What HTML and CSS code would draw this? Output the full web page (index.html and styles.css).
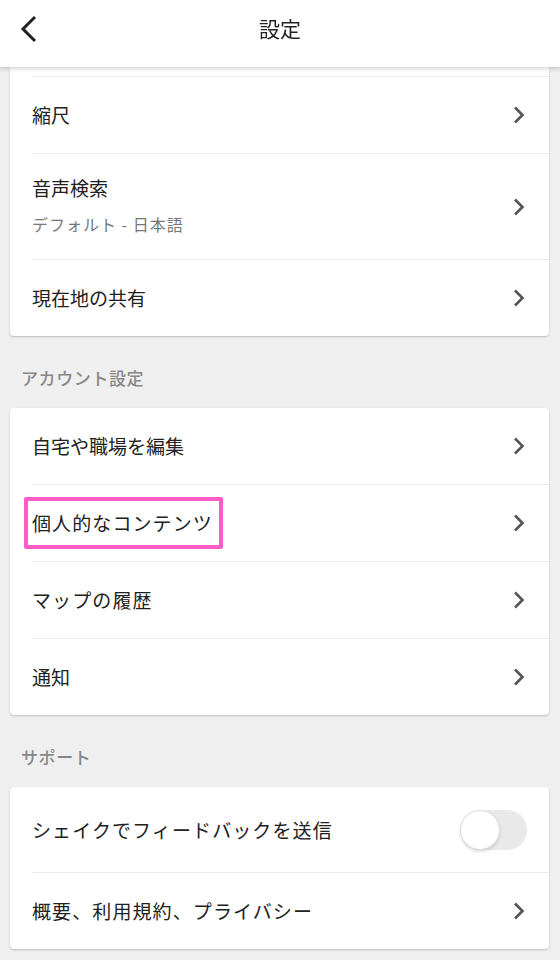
FILE: index.html
```html
<!DOCTYPE html>
<html lang="ja">
<head>
  <meta charset="UTF-8">
  <meta name="viewport" content="width=device-width, initial-scale=1.0">
  <title>設定</title>
  <link rel="stylesheet" href="styles.css">
</head>
<body>
  <header class="top_bar">
    <span class="back_btn">
      <svg width="18" height="28" viewBox="0 0 18 28"><path d="M15 2 L3 14 L15 26" fill="none" stroke="#222" stroke-width="3"/></svg>
    </span>
    <h1 class="title">設定</h1>
  </header>

  <main class="page">
    <ul class="card">
      <li class="row row_hidden"><span class="row_text">ナビの設定</span></li>
      <li class="row">
        <span class="row_text">縮尺</span>
        <svg class="chev" width="12" height="18" viewBox="0 0 12 18"><path d="M2 1.5 L9.5 9 L2 16.5" fill="none" stroke="#555" stroke-width="2.6"/></svg>
      </li>
      <li class="row row_tall">
        <span class="row_body">
          <span class="row_text">音声検索</span>
          <span class="row_sub">デフォルト - 日本語</span>
        </span>
        <svg class="chev" width="12" height="18" viewBox="0 0 12 18"><path d="M2 1.5 L9.5 9 L2 16.5" fill="none" stroke="#555" stroke-width="2.6"/></svg>
      </li>
      <li class="row">
        <span class="row_text">現在地の共有</span>
        <svg class="chev" width="12" height="18" viewBox="0 0 12 18"><path d="M2 1.5 L9.5 9 L2 16.5" fill="none" stroke="#555" stroke-width="2.6"/></svg>
      </li>
    </ul>

    <h2 class="section">アカウント設定</h2>
    <ul class="card">
      <li class="row">
        <span class="row_text">自宅や職場を編集</span>
        <svg class="chev" width="12" height="18" viewBox="0 0 12 18"><path d="M2 1.5 L9.5 9 L2 16.5" fill="none" stroke="#555" stroke-width="2.6"/></svg>
      </li>
      <li class="row">
        <span class="row_text kana mark">個人的なコンテンツ</span>
        <svg class="chev" width="12" height="18" viewBox="0 0 12 18"><path d="M2 1.5 L9.5 9 L2 16.5" fill="none" stroke="#555" stroke-width="2.6"/></svg>
      </li>
      <li class="row">
        <span class="row_text kana">マップの履歴</span>
        <svg class="chev" width="12" height="18" viewBox="0 0 12 18"><path d="M2 1.5 L9.5 9 L2 16.5" fill="none" stroke="#555" stroke-width="2.6"/></svg>
      </li>
      <li class="row">
        <span class="row_text">通知</span>
        <svg class="chev" width="12" height="18" viewBox="0 0 12 18"><path d="M2 1.5 L9.5 9 L2 16.5" fill="none" stroke="#555" stroke-width="2.6"/></svg>
      </li>
    </ul>

    <h2 class="section">サポート</h2>
    <ul class="card">
      <li class="row row_switch">
        <span class="row_text kana">シェイクでフィードバックを送信</span>
        <span class="switch"><span class="knob"></span></span>
      </li>
      <li class="row">
        <span class="row_text kana">概要、利用規約、プライバシー</span>
        <svg class="chev" width="12" height="18" viewBox="0 0 12 18"><path d="M2 1.5 L9.5 9 L2 16.5" fill="none" stroke="#555" stroke-width="2.6"/></svg>
      </li>
    </ul>
  </main>
</body>
</html>
```

FILE: styles.css
```css
*,*:before,*:after{
  box-sizing: border-box;
  margin: 0;
  padding: 0;
}
html,body{
  height: 100%;
}
body{
  overflow: hidden;
  background: #efefef;
  font-family: "Noto Sans CJK JP", "Noto Sans", sans-serif;
  color: #212121;
}

/* top bar lies over the scrolled list */
.top_bar{
  z-index: 10;
  position: fixed;
  left: 0;
  top: 0;
  width: 100%;
  height: 67px;
  display: flex;
  align-items: center;
  justify-content: center;
  background: #fff;
  box-shadow: 0 2px 4px rgba(0,0,0,0.16);
}
.back_btn{
  position: absolute;
  left: 20px;
  top: 15px;
  width: 18px;
  height: 28px;
}
.back_btn svg{
  display: block;
}
.title{
  margin-top: -11px;
  font-size: 21px;
  font-weight: normal;
  color: #222;
}

.page{
  padding: 0 11px 0 10px;
}
.card{
  list-style-type: none;
  background: #fff;
  border-radius: 4px;
  box-shadow: 0 1px 2px rgba(0,0,0,0.22);
}
.row{
  display: flex;
  align-items: center;
  justify-content: space-between;
  height: 77px;
  margin-left: 22px;
  padding-right: 24px;
  border-top: 1px solid #ebebeb;
}
.row:first-child{
  height: 76px;
  border-top: 0;
}
.row.row_tall{
  height: 106px;
}
.row.row_switch{
  height: 85px;
  padding-right: 22px;
}
.row_text{
  font-size: 19px;
  line-height: 24px;
}
.kana{
  letter-spacing: 1.1px;
}
.row_body{
  display: flex;
  flex-direction: column;
  gap: 13px;
  padding-bottom: 3px;
}
.row_sub{
  font-size: 16px;
  line-height: 22px;
  letter-spacing: 1px;
  color: #777;
}
.chev{
  display: block;
}

.section{
  height: 72px;
  padding: 31px 0 0 11px;
  font-size: 17px;
  line-height: 22px;
  letter-spacing: 0.6px;
  font-weight: 500;
  color: #878787;
}

/* pink annotation box */
.mark{
  position: relative;
}
.mark:after{
  content: "";
  position: absolute;
  left: -8px;
  right: -10px;
  top: -14px;
  bottom: -14px;
  border: 4px solid #ff5cc8;
  border-radius: 2px;
}

.switch{
  position: relative;
  width: 67px;
  height: 40px;
  border-radius: 20px;
  background: #e9e9e9;
}
.knob{
  position: absolute;
  left: 0;
  top: 0;
  width: 40px;
  height: 40px;
  border-radius: 50%;
  background: #fff;
  border: 1px solid #dcdcdc;
  box-shadow: 0 2px 3px rgba(0,0,0,0.12);
}
```
